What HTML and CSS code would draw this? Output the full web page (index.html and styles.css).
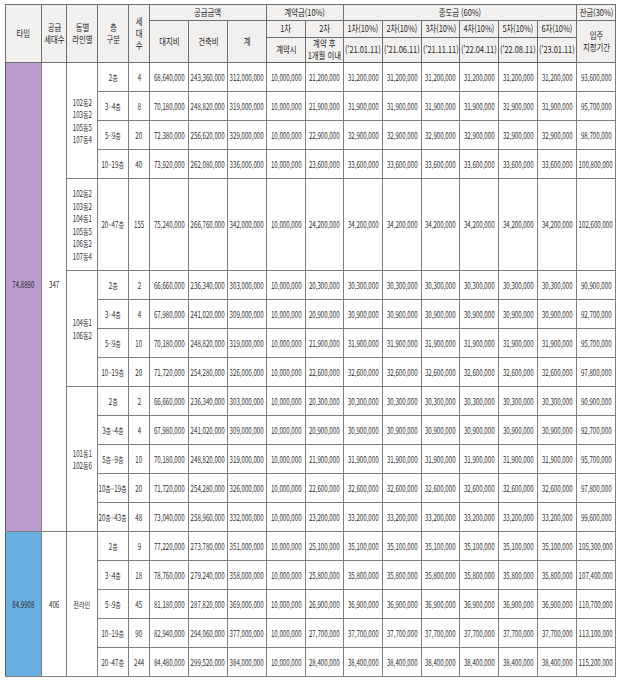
FILE: index.html
```html
<!DOCTYPE html>
<html lang="ko">
<head>
<meta charset="utf-8">
<link rel="stylesheet" href="styles.css">
</head>
<body>
<table class="price">
<colgroup>
<col class="w36"><col class="w25"><col class="w31"><col class="w31"><col class="w21">
<col class="w39"><col class="w39"><col class="w39">
<col class="w39"><col class="w38">
<col class="w39"><col class="w39"><col class="w38"><col class="w39"><col class="w39"><col class="w39">
<col class="w39">
</colgroup>
<thead>
<tr class="h1">
<th rowspan="3"><span>타입</span></th>
<th rowspan="3"><span>공급<br>세대수</span></th>
<th rowspan="3"><span>동별<br>라인별</span></th>
<th rowspan="3"><span>층<br>구분</span></th>
<th rowspan="3"><span class="vert">세<br>대<br>수</span></th>
<th colspan="3"><span>공급금액</span></th>
<th colspan="2"><span>계약금(10%)</span></th>
<th colspan="6"><span>중도금 (60%)</span></th>
<th><span>잔금(30%)</span></th>
</tr>
<tr class="h2">
<th rowspan="2"><span>대지비</span></th>
<th rowspan="2"><span>건축비</span></th>
<th rowspan="2"><span>계</span></th>
<th><span>1차</span></th>
<th><span>2차</span></th>
<th><span>1차(10%)</span></th>
<th><span>2차(10%)</span></th>
<th><span>3차(10%)</span></th>
<th><span>4차(10%)</span></th>
<th><span>5차(10%)</span></th>
<th><span>6차(10%)</span></th>
<th rowspan="2"><span>입주<br>지정기간</span></th>
</tr>
<tr class="h3">
<th><span>계약시</span></th>
<th><span>계약 후<br>1개월 이내</span></th>
<th><span>('21.01.11)</span></th>
<th><span>('21.06.11)</span></th>
<th><span>('21.11.11)</span></th>
<th><span>('22.04.11)</span></th>
<th><span>('22.08.11)</span></th>
<th><span>('23.01.11)</span></th>
</tr>
</thead>
<tbody>
<tr>
<td rowspan="14" class="type purple"><span>74.8890</span></td>
<td rowspan="14" class="type"><span>347</span></td>
<td rowspan="4"><span class="list">102동2<br>103동2<br>105동5<br>107동4</span></td>
<td><span>2층</span></td><td><span>4</span></td>
<td><span>68,640,000</span></td><td><span>243,360,000</span></td><td><span>312,000,000</span></td>
<td><span>10,000,000</span></td><td><span>21,200,000</span></td>
<td><span>31,200,000</span></td><td><span>31,200,000</span></td><td><span>31,200,000</span></td><td><span>31,200,000</span></td><td><span>31,200,000</span></td><td><span>31,200,000</span></td>
<td><span>93,600,000</span></td>
</tr>
<tr>
<td><span>3~4층</span></td><td><span>8</span></td>
<td><span>70,180,000</span></td><td><span>248,820,000</span></td><td><span>319,000,000</span></td>
<td><span>10,000,000</span></td><td><span>21,900,000</span></td>
<td><span>31,900,000</span></td><td><span>31,900,000</span></td><td><span>31,900,000</span></td><td><span>31,900,000</span></td><td><span>31,900,000</span></td><td><span>31,900,000</span></td>
<td><span>95,700,000</span></td>
</tr>
<tr>
<td><span>5~9층</span></td><td><span>20</span></td>
<td><span>72,380,000</span></td><td><span>256,620,000</span></td><td><span>329,000,000</span></td>
<td><span>10,000,000</span></td><td><span>22,900,000</span></td>
<td><span>32,900,000</span></td><td><span>32,900,000</span></td><td><span>32,900,000</span></td><td><span>32,900,000</span></td><td><span>32,900,000</span></td><td><span>32,900,000</span></td>
<td><span>98,700,000</span></td>
</tr>
<tr>
<td><span>10~19층</span></td><td><span>40</span></td>
<td><span>73,920,000</span></td><td><span>262,080,000</span></td><td><span>336,000,000</span></td>
<td><span>10,000,000</span></td><td><span>23,600,000</span></td>
<td><span>33,600,000</span></td><td><span>33,600,000</span></td><td><span>33,600,000</span></td><td><span>33,600,000</span></td><td><span>33,600,000</span></td><td><span>33,600,000</span></td>
<td><span>100,800,000</span></td>
</tr>
<tr class="big">
<td><span class="list">102동2<br>103동2<br>104동1<br>105동5<br>106동2<br>107동4</span></td>
<td><span>20~47층</span></td><td><span>155</span></td>
<td><span>75,240,000</span></td><td><span>266,760,000</span></td><td><span>342,000,000</span></td>
<td><span>10,000,000</span></td><td><span>24,200,000</span></td>
<td><span>34,200,000</span></td><td><span>34,200,000</span></td><td><span>34,200,000</span></td><td><span>34,200,000</span></td><td><span>34,200,000</span></td><td><span>34,200,000</span></td>
<td><span>102,600,000</span></td>
</tr>
<tr>
<td rowspan="4"><span class="list">104동1<br>106동2</span></td>
<td><span>2층</span></td><td><span>2</span></td>
<td><span>66,660,000</span></td><td><span>236,340,000</span></td><td><span>303,000,000</span></td>
<td><span>10,000,000</span></td><td><span>20,300,000</span></td>
<td><span>30,300,000</span></td><td><span>30,300,000</span></td><td><span>30,300,000</span></td><td><span>30,300,000</span></td><td><span>30,300,000</span></td><td><span>30,300,000</span></td>
<td><span>90,900,000</span></td>
</tr>
<tr>
<td><span>3~4층</span></td><td><span>4</span></td>
<td><span>67,980,000</span></td><td><span>241,020,000</span></td><td><span>309,000,000</span></td>
<td><span>10,000,000</span></td><td><span>20,900,000</span></td>
<td><span>30,900,000</span></td><td><span>30,900,000</span></td><td><span>30,900,000</span></td><td><span>30,900,000</span></td><td><span>30,900,000</span></td><td><span>30,900,000</span></td>
<td><span>92,700,000</span></td>
</tr>
<tr>
<td><span>5~9층</span></td><td><span>10</span></td>
<td><span>70,180,000</span></td><td><span>248,820,000</span></td><td><span>319,000,000</span></td>
<td><span>10,000,000</span></td><td><span>21,900,000</span></td>
<td><span>31,900,000</span></td><td><span>31,900,000</span></td><td><span>31,900,000</span></td><td><span>31,900,000</span></td><td><span>31,900,000</span></td><td><span>31,900,000</span></td>
<td><span>95,700,000</span></td>
</tr>
<tr>
<td><span>10~19층</span></td><td><span>20</span></td>
<td><span>71,720,000</span></td><td><span>254,280,000</span></td><td><span>326,000,000</span></td>
<td><span>10,000,000</span></td><td><span>22,600,000</span></td>
<td><span>32,600,000</span></td><td><span>32,600,000</span></td><td><span>32,600,000</span></td><td><span>32,600,000</span></td><td><span>32,600,000</span></td><td><span>32,600,000</span></td>
<td><span>97,800,000</span></td>
</tr>
<tr>
<td rowspan="5"><span class="list">101동1<br>102동6</span></td>
<td><span>2층</span></td><td><span>2</span></td>
<td><span>66,660,000</span></td><td><span>236,340,000</span></td><td><span>303,000,000</span></td>
<td><span>10,000,000</span></td><td><span>20,300,000</span></td>
<td><span>30,300,000</span></td><td><span>30,300,000</span></td><td><span>30,300,000</span></td><td><span>30,300,000</span></td><td><span>30,300,000</span></td><td><span>30,300,000</span></td>
<td><span>90,900,000</span></td>
</tr>
<tr>
<td><span>3층~4층</span></td><td><span>4</span></td>
<td><span>67,980,000</span></td><td><span>241,020,000</span></td><td><span>309,000,000</span></td>
<td><span>10,000,000</span></td><td><span>20,900,000</span></td>
<td><span>30,900,000</span></td><td><span>30,900,000</span></td><td><span>30,900,000</span></td><td><span>30,900,000</span></td><td><span>30,900,000</span></td><td><span>30,900,000</span></td>
<td><span>92,700,000</span></td>
</tr>
<tr>
<td><span>5층~9층</span></td><td><span>10</span></td>
<td><span>70,180,000</span></td><td><span>248,820,000</span></td><td><span>319,000,000</span></td>
<td><span>10,000,000</span></td><td><span>21,900,000</span></td>
<td><span>31,900,000</span></td><td><span>31,900,000</span></td><td><span>31,900,000</span></td><td><span>31,900,000</span></td><td><span>31,900,000</span></td><td><span>31,900,000</span></td>
<td><span>95,700,000</span></td>
</tr>
<tr>
<td><span>10층~19층</span></td><td><span>20</span></td>
<td><span>71,720,000</span></td><td><span>254,280,000</span></td><td><span>326,000,000</span></td>
<td><span>10,000,000</span></td><td><span>22,600,000</span></td>
<td><span>32,600,000</span></td><td><span>32,600,000</span></td><td><span>32,600,000</span></td><td><span>32,600,000</span></td><td><span>32,600,000</span></td><td><span>32,600,000</span></td>
<td><span>97,800,000</span></td>
</tr>
<tr>
<td><span>20층~43층</span></td><td><span>48</span></td>
<td><span>73,040,000</span></td><td><span>258,960,000</span></td><td><span>332,000,000</span></td>
<td><span>10,000,000</span></td><td><span>23,200,000</span></td>
<td><span>33,200,000</span></td><td><span>33,200,000</span></td><td><span>33,200,000</span></td><td><span>33,200,000</span></td><td><span>33,200,000</span></td><td><span>33,200,000</span></td>
<td><span>99,600,000</span></td>
</tr>
<tr>
<td rowspan="5" class="blue"><span>84.9908</span></td>
<td rowspan="5"><span>406</span></td>
<td rowspan="5"><span>전라인</span></td>
<td><span>2층</span></td><td><span>9</span></td>
<td><span>77,220,000</span></td><td><span>273,780,000</span></td><td><span>351,000,000</span></td>
<td><span>10,000,000</span></td><td><span>25,100,000</span></td>
<td><span>35,100,000</span></td><td><span>35,100,000</span></td><td><span>35,100,000</span></td><td><span>35,100,000</span></td><td><span>35,100,000</span></td><td><span>35,100,000</span></td>
<td><span>105,300,000</span></td>
</tr>
<tr>
<td><span>3~4층</span></td><td><span>18</span></td>
<td><span>78,760,000</span></td><td><span>279,240,000</span></td><td><span>358,000,000</span></td>
<td><span>10,000,000</span></td><td><span>25,800,000</span></td>
<td><span>35,800,000</span></td><td><span>35,800,000</span></td><td><span>35,800,000</span></td><td><span>35,800,000</span></td><td><span>35,800,000</span></td><td><span>35,800,000</span></td>
<td><span>107,400,000</span></td>
</tr>
<tr>
<td><span>5~9층</span></td><td><span>45</span></td>
<td><span>81,180,000</span></td><td><span>287,820,000</span></td><td><span>369,000,000</span></td>
<td><span>10,000,000</span></td><td><span>26,900,000</span></td>
<td><span>36,900,000</span></td><td><span>36,900,000</span></td><td><span>36,900,000</span></td><td><span>36,900,000</span></td><td><span>36,900,000</span></td><td><span>36,900,000</span></td>
<td><span>110,700,000</span></td>
</tr>
<tr>
<td><span>10~19층</span></td><td><span>90</span></td>
<td><span>82,940,000</span></td><td><span>294,060,000</span></td><td><span>377,000,000</span></td>
<td><span>10,000,000</span></td><td><span>27,700,000</span></td>
<td><span>37,700,000</span></td><td><span>37,700,000</span></td><td><span>37,700,000</span></td><td><span>37,700,000</span></td><td><span>37,700,000</span></td><td><span>37,700,000</span></td>
<td><span>113,100,000</span></td>
</tr>
<tr>
<td><span>20~47층</span></td><td><span>244</span></td>
<td><span>84,480,000</span></td><td><span>299,520,000</span></td><td><span>384,000,000</span></td>
<td><span>10,000,000</span></td><td><span>28,400,000</span></td>
<td><span>38,400,000</span></td><td><span>38,400,000</span></td><td><span>38,400,000</span></td><td><span>38,400,000</span></td><td><span>38,400,000</span></td><td><span>38,400,000</span></td>
<td><span>115,200,000</span></td>
</tr>
</tbody>
</table>
</body>
</html>
```
FILE: styles.css
```css
html, body {
  margin: 0;
  padding: 0;
  background: #ffffff;
}
body {
  padding: 4px 0 0 5px;
  font-family: "Noto Sans CJK KR", "Noto Sans", sans-serif;
  color: #2a2a2a;
}
.price {
  border-collapse: collapse;
  table-layout: fixed;
  width: 610px;
}
.w36 { width: 36px; }
.w25 { width: 25px; }
.w31 { width: 31px; }
.w21 { width: 21px; }
.w39 { width: 39px; }
.w38 { width: 38px; }

.price th, .price td {
  border: 1px solid #7f7f7f;
  padding: 0;
  text-align: center;
  vertical-align: middle;
  overflow: visible;
}
.price th {
  background: #f1f0ee;
  font-weight: normal;
  font-size: 9px;
  line-height: 12px;
  color: #262626;
  border-color: #6f6f6f;
}
.price thead tr.h3 th {
  border-bottom: 1px solid #5f5f5f;
}
.price td {
  font-size: 8.5px;
  line-height: 12.5px;
}
.h1 { height: 16px; }
.h2 { height: 17px; }
.h3 { height: 25px; }
.price tbody tr { height: 29px; }
.price tbody tr.big { height: 92px; }

.price th span,
.price td span {
  display: inline-block;
  white-space: nowrap;
  margin: 0 -40px;
}
.price th span { transform: scaleX(0.82); }
.price td span { transform: scaleX(0.72); }
.price th span.vert { line-height: 12px; }
.price td span.list { text-align: left; }

.price td.purple {
  background: #b99ccd;
  border-left-color: #555555;
}
.price td.blue {
  background: #69b0e2;
  border-left-color: #555555;
}
.price td.type { padding-bottom: 26px; }
```
